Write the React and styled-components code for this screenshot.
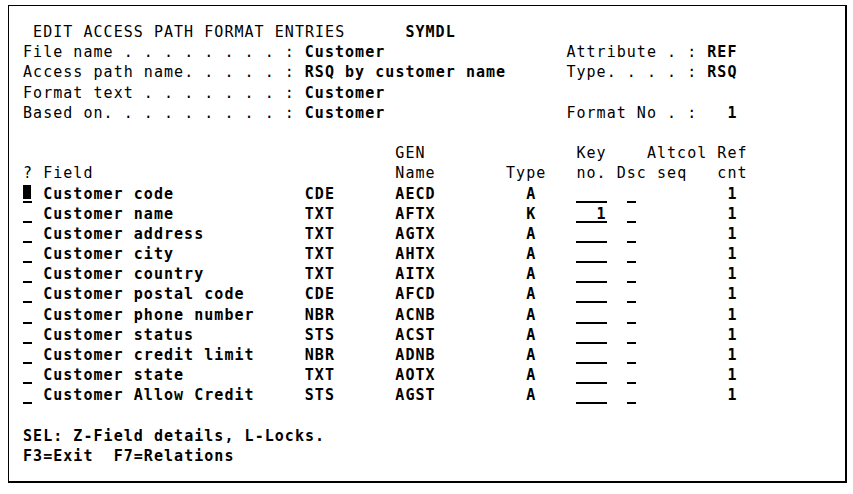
import React from "react";
import styled, { createGlobalStyle } from "styled-components";

// one terminal cell
const CW = 10.07;
const RH = 20.2;
const COLS = 80;

const GlobalStyle = createGlobalStyle`
  html, body {
    margin: 0;
    background: #fff;
  }
  body {
    font-family: "DejaVu Sans Mono", "Liberation Mono", monospace;
  }
`;

const Frame = styled.div`
  box-sizing: border-box;
  width: 839px;
  height: 478px;
  margin: 5px 0 0 8px;
  padding: 16px 0 0 14px;
  border: 1px solid #000;
  border-right-width: 2px;
  border-bottom-width: 2px;
  background: #fff;
  color: #000;
`;

const Screen = styled.div`
  display: flex;
  flex-direction: column;
  font-size: 15px;
  line-height: ${RH}px;
  letter-spacing: ${CW - 9.03}px;
`;

const Line = styled.div`
  display: grid;
  grid-template-columns: repeat(${COLS}, ${CW}px);
  height: ${RH}px;
`;

const Cell = styled.span`
  grid-column: ${(p) => p.$col + 1} / span ${(p) => p.$span};
  white-space: pre;
  font-weight: ${(p) => (p.$bold ? 700 : 400)};
`;

const Input = styled.span`
  grid-column: ${(p) => p.$col + 1} / span ${(p) => p.$span};
  box-sizing: border-box;
  height: 19px;
  margin-right: ${(p) => (p.$span === 1 ? 1 : 0)}px;
  border-bottom: 2px solid #000;
  white-space: pre;
  text-align: right;
  font-weight: 700;
`;

const Cursor = styled.span`
  display: block;
  width: 8px;
  height: 14px;
  margin-top: 1px;
  background: #000;
`;

const T = ({ col, bold, children }) => (
  <Cell $col={col} $span={String(children).length} $bold={bold}>
    {children}
  </Cell>
);

const fields = [
  ["Customer code", "CDE", "AECD", "A", ""],
  ["Customer name", "TXT", "AFTX", "K", "1"],
  ["Customer address", "TXT", "AGTX", "A", ""],
  ["Customer city", "TXT", "AHTX", "A", ""],
  ["Customer country", "TXT", "AITX", "A", ""],
  ["Customer postal code", "CDE", "AFCD", "A", ""],
  ["Customer phone number", "NBR", "ACNB", "A", ""],
  ["Customer status", "STS", "ACST", "A", ""],
  ["Customer credit limit", "NBR", "ADNB", "A", ""],
  ["Customer state", "TXT", "AOTX", "A", ""],
  ["Customer Allow Credit", "STS", "AGST", "A", ""],
];

const FieldRow = ({ field, first }) => {
  const [name, obj, gen, type, key] = field;
  return (
    <Line>
      <Input $col={0} $span={1}>{first && <Cursor />}</Input>
      <T col={2} bold>{name}</T>
      <T col={28} bold>{obj}</T>
      <T col={37} bold>{gen}</T>
      <T col={50} bold>{type}</T>
      <Input $col={55} $span={3}>{key}</Input>
      <Input $col={60} $span={1} />
      <T col={70} bold>1</T>
    </Line>
  );
};

export default function App() {
  return (
    <>
      <GlobalStyle />
      <Frame>
        <Screen>
          <Line>
            <T col={1}>EDIT ACCESS PATH FORMAT ENTRIES</T>
            <T col={38} bold>SYMDL</T>
          </Line>
          <Line>
            <T col={0}>File name . . . . . . . . :</T>
            <T col={28} bold>Customer</T>
            <T col={54}>Attribute . :</T>
            <T col={68} bold>REF</T>
          </Line>
          <Line>
            <T col={0}>Access path name. . . . . :</T>
            <T col={28} bold>RSQ by customer name</T>
            <T col={54}>Type. . . . :</T>
            <T col={68} bold>RSQ</T>
          </Line>
          <Line>
            <T col={0}>Format text . . . . . . . :</T>
            <T col={28} bold>Customer</T>
          </Line>
          <Line>
            <T col={0}>Based on. . . . . . . . . :</T>
            <T col={28} bold>Customer</T>
            <T col={54}>Format No . :</T>
            <T col={70} bold>1</T>
          </Line>
          <Line />
          <Line>
            <T col={37}>GEN</T>
            <T col={55}>Key</T>
            <T col={62}>Altcol</T>
            <T col={69}>Ref</T>
          </Line>
          <Line>
            <T col={0}>? Field</T>
            <T col={37}>Name</T>
            <T col={48}>Type</T>
            <T col={55}>no. Dsc seq</T>
            <T col={69}>cnt</T>
          </Line>
          {fields.map((f, i) => (
            <FieldRow key={f[2]} field={f} first={i === 0} />
          ))}
          <Line />
          <Line>
            <T col={0} bold>SEL: Z-Field details, L-Locks.</T>
          </Line>
          <Line>
            <T col={0} bold>F3=Exit  F7=Relations</T>
          </Line>
        </Screen>
      </Frame>
    </>
  );
}
